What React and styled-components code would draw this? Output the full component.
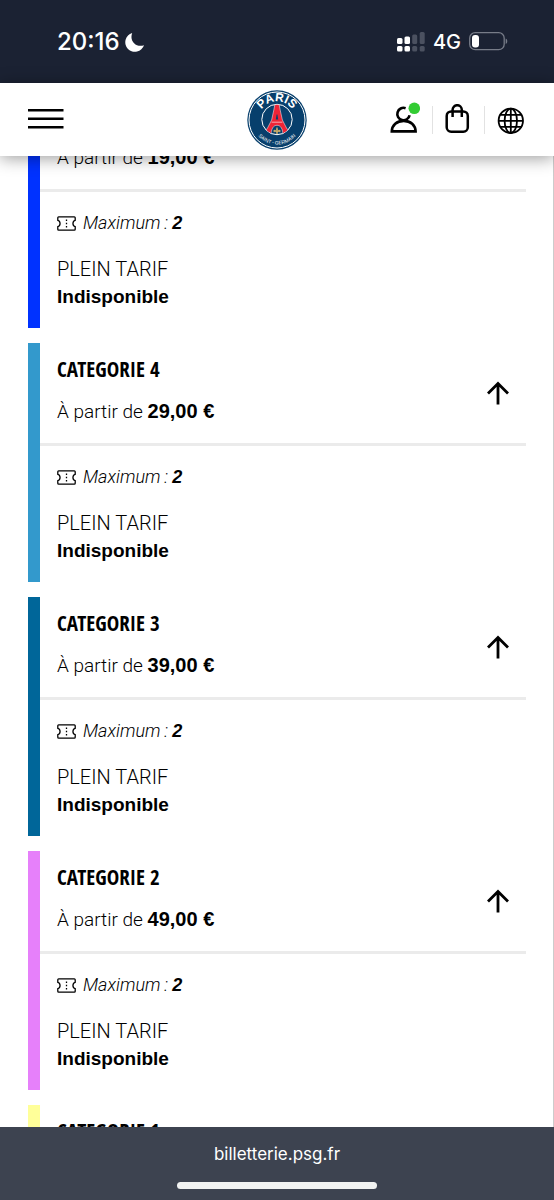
import React, { useState } from 'react';
import styled, { createGlobalStyle } from 'styled-components';

const categories = [
  { id: 5, name: 'CATEGORIE 5', price: '19,00 €', color: '#0032ff' },
  { id: 4, name: 'CATEGORIE 4', price: '29,00 €', color: '#3399cc' },
  { id: 3, name: 'CATEGORIE 3', price: '39,00 €', color: '#006699' },
  { id: 2, name: 'CATEGORIE 2', price: '49,00 €', color: '#e680fa' },
  { id: 1, name: 'CATEGORIE 1', price: '69,00 €', color: '#ffff99' },
];

const App = () => {
  return (
    <>
      <GlobalStyle />
      <Shell>
        <StatusBar />
        <Header />
        <Content>
          <List>
            {categories.map((category) => (
              <CategoryCard key={category.id} {...category} />
            ))}
          </List>
        </Content>
        <BrowserBar>
          <Address href="#top">billetterie.psg.fr</Address>
          <HomeIndicator />
        </BrowserBar>
      </Shell>
    </>
  );
};

export default App;

const StatusBar = () => (
  <StyledStatusBar>
    <StatusGroup $gap="5px">
      <Clock>20:16</Clock>
      <svg width="20" height="20" viewBox="0 0 20 20" aria-hidden="true">
        <path d="M7.2 1A9.6 9.6 0 1 0 19 13.2C11.5 15.8 4 9.5 7.2 1Z" fill="#fff" />
      </svg>
    </StatusGroup>
    <StatusGroup $gap="8px">
      <svg width="28" height="20" viewBox="0 0 28 20" aria-hidden="true">
        <g fill="#fff">
          <rect x="0" y="6" width="5.5" height="6" rx="1.5" />
          <rect x="7.5" y="4.5" width="5.5" height="7.5" rx="1.5" />
          <rect x="0" y="14" width="5.5" height="5.5" rx="1.5" />
          <rect x="7.5" y="14" width="5.5" height="5.5" rx="1.5" />
        </g>
        <g fill="#4b5160">
          <rect x="15.2" y="2.5" width="5" height="9.5" rx="1.5" />
          <rect x="22.7" y="0" width="5" height="12" rx="1.5" />
          <rect x="15.2" y="14" width="5" height="5.5" rx="1.5" />
          <rect x="22.7" y="14" width="5" height="5.5" rx="1.5" />
        </g>
      </svg>
      <Network>4G</Network>
      <svg width="39" height="19" viewBox="0 0 39 19" aria-hidden="true">
        <rect
          x="0.7"
          y="0.7"
          width="34.5"
          height="17"
          rx="5.5"
          fill="none"
          stroke="#777c88"
          strokeWidth="1.3"
        />
        <rect x="3" y="3" width="7" height="12.5" rx="3" fill="#fff" />
        <path d="M36.7 6.5C38.8 7.3 38.8 11.2 36.7 12Z" fill="#777c88" />
      </svg>
    </StatusGroup>
  </StyledStatusBar>
);

const Header = () => (
  <StyledHeader>
    <MenuButton type="button" aria-label="Menu">
      <svg width="36" height="22" viewBox="0 0 36 22">
        <path d="M0 1.2H35.5M0 9.8H35.5M0 18.2H35.5" stroke="#000" strokeWidth="2.4" />
      </svg>
    </MenuButton>
    <HomeLink href="#top" aria-label="Paris Saint-Germain">
      <Crest />
    </HomeLink>
    <Actions>
      <ActionButton type="button" aria-label="Mon compte">
        <svg width="30" height="35" viewBox="0 -2 30 35">
          <g fill="none" stroke="#000" strokeWidth="2.6">
            <path d="M15.6 4.2A6.2 6.2 0 1 0 19.6 11.2" />
            <path d="M1.8 27.4C2 21.2 6.8 16.9 13.7 16.9S25.4 21.2 25.6 27.4Z" />
          </g>
          <circle cx="24.3" cy="4.3" r="5.8" fill="#33cc33" />
        </svg>
      </ActionButton>
      <Separator />
      <ActionButton type="button" aria-label="Panier">
        <svg width="27" height="31" viewBox="0 0 27 31">
          <g fill="none" stroke="#000" strokeWidth="2.5">
            <rect x="1.7" y="7.4" width="21.1" height="20.3" rx="4.5" />
            <path d="M7.6 13V5.8A4.6 4.6 0 0 1 16.8 5.8V13" />
          </g>
        </svg>
      </ActionButton>
      <Separator />
      <ActionButton type="button" aria-label="Langue">
        <svg width="28" height="28" viewBox="0 0 28 28">
          <g fill="none" stroke="#000" strokeWidth="1.8">
            <circle cx="13.8" cy="14.8" r="12.2" />
            <ellipse cx="13.8" cy="14.8" rx="6.2" ry="12.2" />
            <path d="M13.8 2.6V27M1.6 14.8H26M3.4 8.8H24.2M3.4 20.8H24.2" />
          </g>
        </svg>
      </ActionButton>
    </Actions>
  </StyledHeader>
);

const Crest = () => (
  <svg width="60" height="60" viewBox="0 0 60 60">
    <defs>
      <path id="crest-top" d="M11 30.5A19 19 0 0 1 49 30.5" />
      <path id="crest-bottom" d="M5.4 30A24.6 24.6 0 0 0 54.6 30" />
      <clipPath id="crest-inner">
        <circle cx="30" cy="29.5" r="14.8" />
      </clipPath>
    </defs>
    <circle cx="30" cy="30" r="29.7" fill="#073f6c" />
    <circle cx="30" cy="30" r="28" fill="none" stroke="#fff" strokeWidth="1" />
    <circle cx="30" cy="29.5" r="15.2" fill="#073f6c" stroke="#fff" strokeWidth="1" />
    <g clipPath="url(#crest-inner)">
      <path
        d="M28.2 13H31.8L33.4 21L35.4 30L39.5 38L45 46H36C36 38.5 33.5 35.3 30 35.3S24 38.5 24 46H15L20.5 38L24.6 30L26.6 21Z"
        fill="#ee2436"
        stroke="#fff"
        strokeWidth="0.5"
      />
      <path d="M24.6 32.2H35.4" stroke="#fff" strokeWidth="0.6" />
      <path d="M29.6 24.5H30.4L31.2 29.4H28.8Z" fill="#073f6c" />
    </g>
    <path
      d="M30 36.8C31.4 39 31 40.5 30.5 41.3C32 38.8 34.3 39.8 33.3 42C32.8 42.5 32 42.1 32.2 41.7L30.7 42L31.1 43.8H28.9L29.3 42L27.8 41.7C28 42.1 27.2 42.5 26.7 42C25.7 39.8 28 38.8 29.5 41.3C29 40.5 28.6 39 30 36.8Z"
      fill="#c9ac68"
    />
    <CrestText fontSize="12" fontWeight="700">
      <textPath href="#crest-top" startOffset="50%">
        PARIS
      </textPath>
    </CrestText>
    <CrestText fontSize="5" fontWeight="400">
      <textPath href="#crest-bottom" startOffset="50%">
        SAINT - GERMAIN
      </textPath>
    </CrestText>
  </svg>
);

const CategoryCard = ({ name, price, color }) => {
  const [open, setOpen] = useState(true);

  return (
    <Card $color={color}>
      <CardHeader>
        <Summary>
          <CardTitle>{name}</CardTitle>
          <Price>
            À partir de <strong>{price}</strong>
          </Price>
        </Summary>
        <ToggleButton
          type="button"
          aria-label={name}
          aria-expanded={open}
          onClick={() => setOpen((prev) => !prev)}
        >
          <Arrow $open={open} width="24" height="24" viewBox="0 0 24 24">
            <path
              d="M12 23.5V2.8M2 12.5L12 2.5L22 12.5"
              fill="none"
              stroke="#000"
              strokeWidth="2.8"
            />
          </Arrow>
        </ToggleButton>
      </CardHeader>
      {open && (
        <CardBody>
          <Maximum>
            <svg width="19" height="15" viewBox="0 0 19 15" aria-hidden="true">
              <path
                d="M1.7 0.8H17.3Q18.2 0.8 18.2 1.7V4.3C15.2 5 15.2 10 18.2 10.7V13.3Q18.2 14.2 17.3 14.2H1.7Q0.8 14.2 0.8 13.3V10.7C3.8 10 3.8 5 0.8 4.3V1.7Q0.8 0.8 1.7 0.8Z"
                fill="none"
                stroke="#000"
                strokeWidth="1.3"
              />
              <path
                d="M9.5 3.5V12"
                stroke="#000"
                strokeWidth="1.3"
                strokeDasharray="1.5 1.8"
              />
            </svg>
            <span>
              Maximum{'\u2009'}: <strong>2</strong>
            </span>
          </Maximum>
          <Rate>PLEIN TARIF</Rate>
          <Availability>Indisponible</Availability>
        </CardBody>
      )}
    </Card>
  );
};

const GlobalStyle = createGlobalStyle`
  * {
    box-sizing: border-box;
  }

  body {
    margin: 0;
    color: #000000;
    font-family: Roboto, 'Liberation Sans', sans-serif;
    font-weight: 300;
  }

  h2,
  p {
    margin: 0;
  }

  button {
    padding: 0;
    border: 0;
    background: none;
    cursor: pointer;
  }

  svg {
    display: block;
  }
`;

const Shell = styled.div`
  display: flex;
  flex-direction: column;
  height: 100vh;
  background-color: #ffffff;
`;

const StyledStatusBar = styled.div`
  display: flex;
  flex-shrink: 0;
  justify-content: space-between;
  align-items: center;
  height: 83px;
  padding: 0 46px 0 57px;
  background-color: #1b2233;
  color: #ffffff;
  font-family: Inter, sans-serif;
`;

const StatusGroup = styled.div`
  display: flex;
  align-items: center;
  gap: ${(props) => props.$gap};
`;

const Clock = styled.span`
  font-size: 24px;
  font-weight: 500;
`;

const Network = styled.span`
  font-size: 20px;
  font-weight: 500;
`;

const StyledHeader = styled.header`
  position: relative;
  z-index: 1;
  display: grid;
  flex-shrink: 0;
  grid-template-columns: 1fr auto 1fr;
  align-items: center;
  height: 73px;
  padding: 0 28px;
  background-color: #ffffff;
  box-shadow: 0 2px 16px rgba(0, 0, 0, 0.4);
`;

const MenuButton = styled.button`
  justify-self: start;
`;

const HomeLink = styled.a`
  display: block;
`;

const Actions = styled.div`
  display: flex;
  justify-self: end;
  align-items: center;
  gap: 12px;
  padding-right: 1px;
`;

const ActionButton = styled.button`
  display: flex;
  align-items: center;
  height: 35px;
`;

const Separator = styled.span`
  width: 1px;
  height: 28px;
  background-color: #e2e2e2;
`;

const Content = styled.main`
  flex: 1;
  min-height: 0;
  overflow: hidden auto;
  scrollbar-width: none;
  border-right: 1px solid #cccccc;
`;

const List = styled.div`
  display: flex;
  flex-direction: column;
  gap: 15px;
  margin-top: -67px;
  padding: 0 27px 28px 28px;
`;

const Card = styled.section`
  border-left: 12px solid ${(props) => props.$color};
`;

const CardHeader = styled.div`
  display: flex;
  justify-content: space-between;
  align-items: center;
  height: 103px;
  padding: 0 16px 0 17px;
  border-bottom: 3px solid #ebebeb;
`;

const Summary = styled.div`
  padding-bottom: 8px;
`;

const CardTitle = styled.h2`
  font-family: 'Noto Sans ExtraCondensed', 'Open Sans Condensed', 'Roboto Condensed', sans-serif;
  font-size: 21px;
  font-weight: 600;
  line-height: 28px;
`;

const Price = styled.p`
  margin-top: 16px;
  font-size: 19px;
  line-height: 24px;

  strong {
    font-family: 'Liberation Sans', sans-serif;
    font-size: 20px;
    font-weight: 700;
  }
`;

const ToggleButton = styled.button`
  display: flex;
`;

const Arrow = styled.svg`
  transform: rotate(${(props) => (props.$open ? 0 : 180)}deg);
`;

const CardBody = styled.div`
  padding: 19px 17px 18px;
`;

const Maximum = styled.p`
  display: flex;
  align-items: center;
  gap: 7px;
  margin-bottom: 21px;
  font-size: 18px;
  font-style: italic;
  line-height: 24px;

  strong {
    font-family: 'Liberation Sans', sans-serif;
    font-weight: 700;
  }
`;

const Rate = styled.p`
  font-size: 20px;
  line-height: 27px;
`;

const Availability = styled.p`
  font-family: 'Liberation Sans', sans-serif;
  font-size: 19px;
  font-weight: 700;
  line-height: 27px;
`;

const BrowserBar = styled.footer`
  display: flex;
  flex-shrink: 0;
  flex-direction: column;
  justify-content: space-between;
  align-items: center;
  height: 73px;
  padding: 14px 0 11px;
  background-color: #3d4350;
`;

const Address = styled.a`
  color: #ffffff;
  font-family: Inter, sans-serif;
  font-size: 17px;
  font-weight: 400;
  line-height: 26px;
  text-decoration: none;
`;

const HomeIndicator = styled.span`
  width: 36%;
  height: 7px;
  border-radius: 4px;
  background-color: #f1f2f1;
`;

const CrestText = styled.text`
  fill: #ffffff;
  font-family: 'Liberation Sans', sans-serif;
  text-anchor: middle;
`;
